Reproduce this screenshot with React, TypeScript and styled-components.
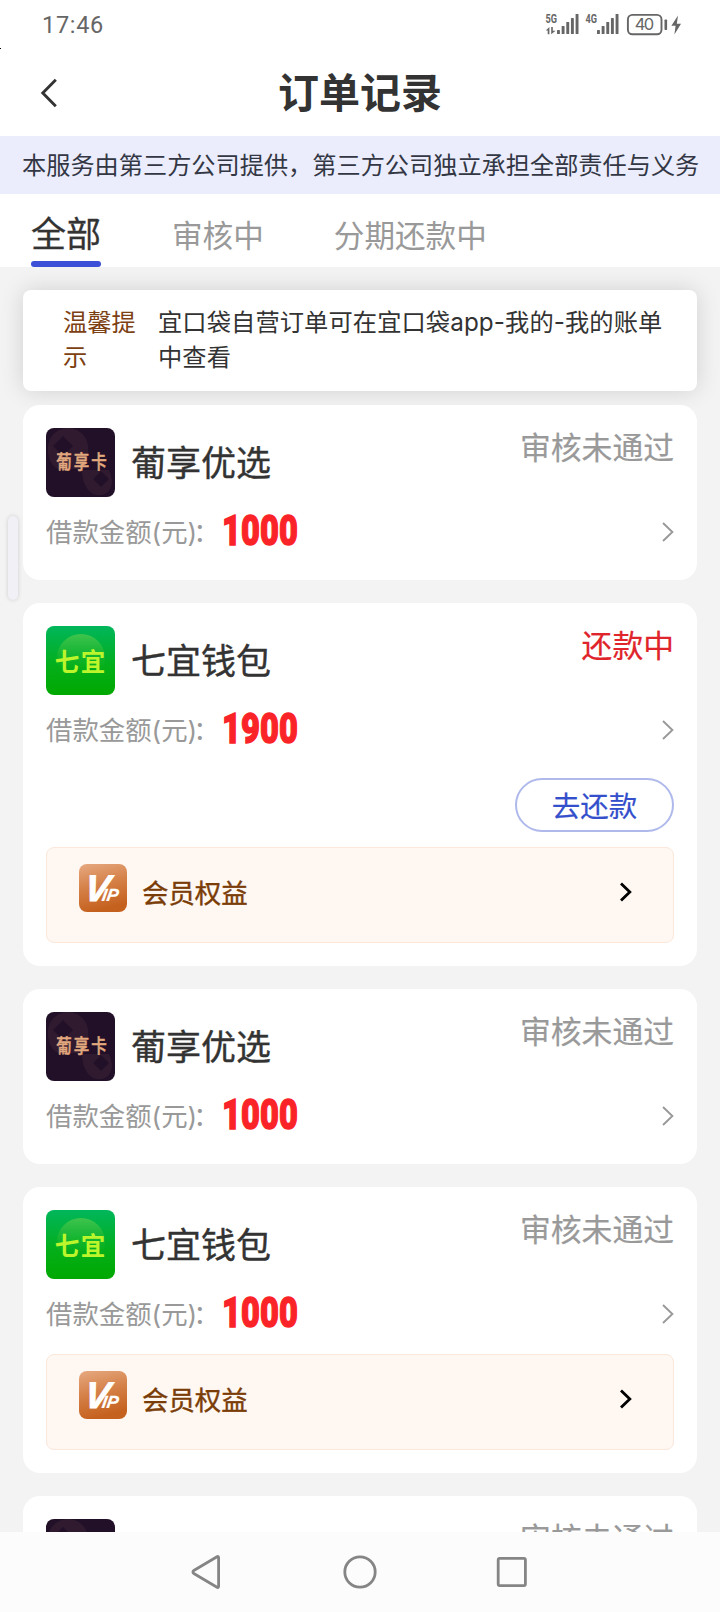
import React from 'react';
import styled, { createGlobalStyle } from 'styled-components';

const GlobalStyle = createGlobalStyle`
  * { box-sizing: border-box; }
  body {
    margin: 0;
    background: #f3f3f3;
    font-family: Inter, 'Noto Sans CJK SC', sans-serif;
    color: #333;
  }
`;

const Screen = styled.div`
  position: relative;
  width: 720px;
  height: 1612px;
  overflow: hidden;
  display: flex;
  flex-direction: column;
  background: #f3f3f3;
`;

const StatusBar = styled.div`
  height: 49px;
  flex: none;
  background: #fff;
  display: flex;
  justify-content: space-between;
  padding: 0 38px 0 42px;
`;

const Clock = styled.span`
  font: 400 23.5px/50px Roboto, sans-serif;
  letter-spacing: 0.7px;
  color: #666;
`;

const Speck = styled.i`
  position: absolute;
  left: 0;
  top: 48px;
  width: 1px;
  height: 1px;
  background: #000;
`;

const Header = styled.header`
  height: 87px;
  flex: none;
  background: #fff;
  display: grid;
  grid-template-columns: 80px 1fr 80px;
  align-items: center;
`;

const BackButton = styled.button`
  border: 0;
  background: none;
  padding: 0 0 0 40px;
  height: 87px;
  display: flex;
  align-items: center;
`;

const Title = styled.h1`
  margin: 0;
  text-align: center;
  font-size: 41px;
  font-weight: 700;
  line-height: 87px;
  padding-top: 1px;
`;

const Notice = styled.div`
  height: 58px;
  flex: none;
  background: #ebedfc;
  padding-left: 22px;
  font-size: 24.2px;
  line-height: 60px;
  white-space: nowrap;
  color: #333744;
`;

const Tabs = styled.nav`
  height: 73px;
  flex: none;
  background: #fff;
  display: flex;
  padding-left: 31px;
`;

const Tab = styled.div<{ $active?: boolean }>`
  height: 73px;
  margin-right: ${p => (p.$active ? 71 : 70)}px;
  font-size: ${p => (p.$active ? 35 : 30.6)}px;
  line-height: ${p => (p.$active ? 80 : 84)}px;
  color: ${p => (p.$active ? '#333' : '#999')};
  -webkit-text-stroke: ${p => (p.$active ? '0.3px' : '0')};
  display: flex;
  flex-direction: column;
  justify-content: space-between;
  white-space: nowrap;
`;

const TabLabel = styled.span`
  height: 67px;
`;

const TabLine = styled.span`
  height: 6px;
  width: 70px;
  border-radius: 3px;
  background: #3b50d6;
`;

const Content = styled.main`
  flex: 1;
  min-height: 0;
  overflow: hidden;
  padding: 23px 23px 0;
`;

const Tip = styled.div`
  height: 101px;
  border-radius: 8px;
  background: #fff;
  box-shadow: 0 0 23px rgba(0, 0, 0, 0.14);
  margin-bottom: 14px;
  padding: 15px 0 0 40px;
  display: flex;
  font-size: 24.25px;
  line-height: 35px;
`;

const TipLabel = styled.div`
  width: 80px;
  margin-right: 15px;
  color: #7c4012;
`;

const TipText = styled.div`
  width: 514px;
  letter-spacing: 0.1px;
`;

const Card = styled.section`
  position: relative;
  background: #fff;
  border-radius: 17px;
  padding: 23px;
  margin-bottom: 23px;
`;

const CardTop = styled.div`
  display: flex;
  height: 69px;
`;

const Logo = styled.svg`
  width: 69px;
  height: 69px;
  border-radius: 8px;
  flex: none;
`;

const Name = styled.h2`
  margin: 0 0 0 16px;
  font-size: 35px;
  font-weight: 400;
  line-height: 71px;
  -webkit-text-stroke: 0.4px;
  flex: 1;
`;

const Status = styled.span<{ $red?: boolean }>`
  font-size: 30.8px;
  line-height: 39px;
  color: ${p => (p.$red ? '#e0242b' : '#999')};
  -webkit-text-stroke: 0.2px;
`;

const AmountRow = styled.div`
  display: flex;
  align-items: center;
  height: 60px;
  padding-top: 10px;
`;

const AmountLabel = styled.span`
  width: 176px;
  flex: none;
  white-space: nowrap;
  font-size: 26.4px;
  line-height: 50px;
  color: #999;
`;

const Colon = styled.span`
  margin-left: -4px;
`;

const Amount = styled.b`
  flex: 1;
  font: 900 42px/50px Roboto, sans-serif;
  letter-spacing: 0.2px;
  -webkit-text-stroke: 1.4px #fa2428;
  transform: translateY(-1px) scaleX(0.775);
  transform-origin: 0 50%;
  color: #fa2428;
`;

const Actions = styled.div`
  display: flex;
  justify-content: flex-end;
  padding-top: 23px;
  height: 92px;
`;

const PayButton = styled.button`
  width: 159px;
  height: 54px;
  padding: 2px 0 0;
  border: 2px solid #afb9eb;
  border-radius: 27px;
  background: #fff;
  font-family: inherit;
  font-size: 28.5px;
  line-height: 49px;
  color: #344fcb;
  -webkit-text-stroke: 0.2px;
`;

const VipRow = styled.div<{ $spaced: boolean }>`
  height: 96px;
  margin-top: ${p => (p.$spaced ? 15 : 0)}px;
  border: 1px solid #fbe8db;
  border-radius: 8px;
  background: #fff7f1;
  display: flex;
  padding: 16px 41px 0 32px;
`;

const VipIcon = styled.svg`
  width: 48px;
  height: 48px;
  border-radius: 8px;
  flex: none;
`;

const VipText = styled.span`
  flex: 1;
  margin-left: 15px;
  font-size: 26.4px;
  line-height: 58px;
  color: #7a3d08;
  -webkit-text-stroke: 0.4px;
`;

const VipArrow = styled.svg`
  margin-top: 18px;
`;

const EdgeHandle = styled.i`
  position: absolute;
  left: 8px;
  top: 516px;
  width: 10px;
  height: 84px;
  border-radius: 5px;
  background: #f0f0f6;
  box-shadow: 0 0 4px rgba(0, 0, 0, 0.16);
`;

const NavBar = styled.footer`
  height: 80px;
  flex: none;
  background: #fcfcfc;
  display: flex;
  justify-content: center;
  align-items: center;
  gap: 117px;
`;

const NavIcon = styled.svg`
  width: 34px;
  height: 36px;
  overflow: visible;
  fill: none;
  stroke: #858585;
  stroke-width: 2.8;
  stroke-linejoin: round;
`;

function SignalIcons() {
  const bars = (x: number) =>
    [0, 1, 2, 3, 4].map(i => (
      <rect key={i} x={x + i * 4.65} y={30 - i * 4} width="2.9" height={4 + i * 4} rx="0.6" />
    ));
  return (
    <svg width="140" height="49" viewBox="542 0 140 49" fill="#666">
      <text x="545.5" y="23" fontFamily="Roboto, sans-serif" fontSize="12" fontWeight="700" textLength="11.5" lengthAdjust="spacingAndGlyphs">5G</text>
      <path d="M545.8 30.4l3.6-3.4v7.2h-1.7v-3.8zM551.2 27h1.6v3.8h2.8l-4.4 3.4z" />
      {bars(557)}
      <text x="585.5" y="23" fontFamily="Roboto, sans-serif" fontSize="12" fontWeight="700" textLength="11.5" lengthAdjust="spacingAndGlyphs">4G</text>
      {bars(597)}
      <rect x="627.9" y="14.9" width="33.6" height="19.4" rx="4.5" fill="none" stroke="#666" strokeWidth="1.9" />
      <text x="644.4" y="30.2" textAnchor="middle" fontFamily="Inter, sans-serif" fontSize="16.5" textLength="19.5" lengthAdjust="spacing">40</text>
      <rect x="664.5" y="19.5" width="2.6" height="10.5" rx="0.8" />
      <path d="M678 15.5l-6.6 10.2h4.2l-1.2 8.8 6.6-10.7h-4.2z" />
    </svg>
  );
}

function GrapeLogo() {
  return (
    <Logo viewBox="0 0 69 69">
      <rect width="69" height="69" fill="#211027" />
      <path d="M2 22a20 20 0 0 1 40-4c0 8 1 12-4 23H12C5 37 2 30 2 22z" fill="#2f1a30" />
      <path d="M36 42l27 0c4 9 4 16-1 22-6 5-14 4-19-1-5-6-7-12-7-21z" fill="#2f1a30" />
      <path d="M17 8l10 10-10 10L7 18zM55 43l8 8-8 8-8-8z" fill="#211027" />
      <text x="10.2" y="33.3" fontFamily="'Noto Sans CJK SC', sans-serif" fontWeight="500" fontSize="15.5" fill="#e2a87e" stroke="#e2a87e" strokeWidth="0.4" letterSpacing="2" transform="scale(1 1.24)">葡享卡</text>
    </Logo>
  );
}

function SevenLogo() {
  return (
    <Logo viewBox="0 0 69 69">
      <defs>
        <linearGradient id="seven-bg" x1="0" y1="0" x2="0" y2="1">
          <stop offset="0" stopColor="#00b65b" />
          <stop offset="0.6" stopColor="#04ae18" />
          <stop offset="1" stopColor="#00a800" />
        </linearGradient>
        <linearGradient id="seven-disc" x1="0" y1="0" x2="0" y2="1">
          <stop offset="0" stopColor="#55c94c" stopOpacity="0.75" />
          <stop offset="0.75" stopColor="#2cb82a" stopOpacity="0" />
        </linearGradient>
      </defs>
      <rect width="69" height="69" fill="url(#seven-bg)" />
      <circle cx="35" cy="32" r="24" fill="url(#seven-disc)" />
      <text x="8.8" y="44.9" fontFamily="'Noto Sans CJK SC', sans-serif" fontWeight="700" fontSize="24.5" letterSpacing="1.5" fill="#bdf52c">七宜</text>
    </Logo>
  );
}

function VipBadge() {
  return (
    <VipIcon viewBox="0 0 48 48">
      <defs>
        <linearGradient id="vip-bg" x1="0" y1="0" x2="0.25" y2="1">
          <stop offset="0" stopColor="#e6a981" />
          <stop offset="0.5" stopColor="#d58148" />
          <stop offset="1" stopColor="#c5611f" />
        </linearGradient>
      </defs>
      <rect width="48" height="48" fill="url(#vip-bg)" />
      <text
        transform="translate(4 37) skewX(-9)"
        fill="#fff"
        stroke="#fff"
        strokeWidth="0.9"
        fontFamily="'Liberation Sans', sans-serif"
        fontWeight="700"
        fontStyle="italic"
        fontSize="37"
      >
        V<tspan fontSize="17.5" strokeWidth="0.2" dx="-6.5">IP</tspan>
      </text>
    </VipIcon>
  );
}

type Order = {
  brand: 'grape' | 'seven';
  amount: number;
  status: string;
  repay?: boolean;
  vip?: boolean;
};

const orders: Order[] = [
  { brand: 'grape', amount: 1000, status: '审核未通过' },
  { brand: 'seven', amount: 1900, status: '还款中', repay: true, vip: true },
  { brand: 'grape', amount: 1000, status: '审核未通过' },
  { brand: 'seven', amount: 1000, status: '审核未通过', vip: true },
  { brand: 'grape', amount: 1000, status: '审核未通过' },
];

function OrderCard({ order }: { order: Order }) {
  return (
    <Card>
      <CardTop>
        {order.brand === 'grape' ? <GrapeLogo /> : <SevenLogo />}
        <Name>{order.brand === 'grape' ? '葡享优选' : '七宜钱包'}</Name>
        <Status $red={order.repay}>{order.status}</Status>
      </CardTop>
      <AmountRow>
        <AmountLabel>借款金额(元)<Colon>：</Colon></AmountLabel>
        <Amount>{order.amount}</Amount>
        <svg width="12" height="20" viewBox="0 0 12 20" fill="none" stroke="#999" strokeWidth="1.9">
          <path d="M1 1l9.4 9L1 19" />
        </svg>
      </AmountRow>
      {order.repay && (
        <Actions>
          <PayButton>去还款</PayButton>
        </Actions>
      )}
      {order.vip && (
        <VipRow $spaced={!order.repay}>
          <VipBadge />
          <VipText>会员权益</VipText>
          <VipArrow width="12" height="20" viewBox="0 0 12 20" fill="none" stroke="#000" strokeWidth="2.8">
            <path d="M1 1.5l8.8 8.5L1 18.5" />
          </VipArrow>
        </VipRow>
      )}
    </Card>
  );
}

export default function App() {
  return (
    <Screen>
      <GlobalStyle />
      <StatusBar>
        <Clock>17:46</Clock>
        <SignalIcons />
      </StatusBar>
      <Speck />
      <Header>
        <BackButton aria-label="返回">
          <svg width="18" height="30" viewBox="0 0 18 30" fill="none" stroke="#333" strokeWidth="2.9">
            <path d="M15.8 1.8L2.8 15l13 13.2" />
          </svg>
        </BackButton>
        <Title>订单记录</Title>
      </Header>
      <Notice>本服务由第三方公司提供，第三方公司独立承担全部责任与义务</Notice>
      <Tabs>
        <Tab $active>
          <TabLabel>全部</TabLabel>
          <TabLine />
        </Tab>
        <Tab>审核中</Tab>
        <Tab>分期还款中</Tab>
      </Tabs>
      <Content>
        <Tip>
          <TipLabel>温馨提示</TipLabel>
          <TipText>宜口袋自营订单可在宜口袋app-我的-我的账单中查看</TipText>
        </Tip>
        {orders.map((o, i) => (
          <OrderCard key={i} order={o} />
        ))}
      </Content>
      <NavBar>
        <NavIcon viewBox="0 0 34 36">
          <path d="M26.6 3.6v28.8c0 1-.9 1.3-1.6.9L1.8 19.5c-1.2-.7-1.2-2.3 0-3L25 2.7c.7-.4 1.6-.1 1.6.9z" />
        </NavIcon>
        <NavIcon viewBox="0 0 34 36">
          <circle cx="17" cy="18" r="15.2" />
        </NavIcon>
        <NavIcon viewBox="0 0 34 36">
          <rect x="4.2" y="4.4" width="27.2" height="27.2" rx="1.5" />
        </NavIcon>
      </NavBar>
      <EdgeHandle />
    </Screen>
  );
}
